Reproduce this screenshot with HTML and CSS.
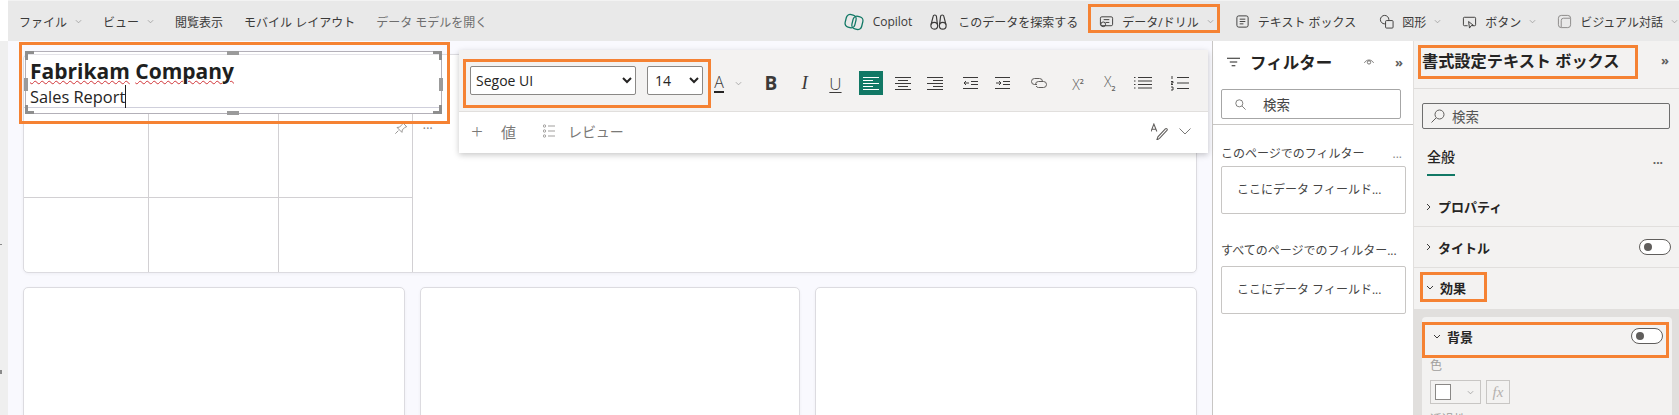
FILE: index.html
```html
<!DOCTYPE html>
<html lang="ja">

<head>
  <meta charset="utf-8">
  <title>Fabrikam Company - Sales Report</title>
  <link rel="stylesheet" href="styles.css">
</head>

<body>
  <div class="page">
    <header class="topbar">
      <nav class="menu">
        <span class="menu-item">ファイル<svg class="chev" viewBox="0 0 8 5"><path d="M1 1l3 3 3-3"/></svg></span>
        <span class="menu-item">ビュー<svg class="chev" viewBox="0 0 8 5"><path d="M1 1l3 3 3-3"/></svg></span>
        <span class="menu-item">閲覧表示</span>
        <span class="menu-item">モバイル レイアウト</span>
        <span class="menu-item is-muted">データ モデルを開く</span>
      </nav>
      <nav class="menu menu-right">
        <span class="menu-item"><svg class="icon copilot" viewBox="0 0 20 20"><g transform="rotate(14 10 10)"><rect x="1.500" y="3.500" width="10" height="13" rx="4"/><rect x="8.500" y="3.500" width="10" height="13" rx="4"/></g></svg><span class="copilot-label">Copilot</span></span>
        <span class="menu-item"><svg class="icon binoculars" viewBox="1.500 1 15 17"><path d="M2 12l2-8c.3-1.500 2.700-1.500 3 0l1 8M10 12l1-8c.3-1.500 2.700-1.500 3 0l2 8"/><circle cx="5" cy="13" r="3.200"/><circle cx="13" cy="13" r="3.200"/></svg>このデータを探索する</span>
        <span class="menu-item"><svg class="icon" viewBox="0 0 16 16"><rect x="1.500" y="3" width="13" height="9.500" rx="1.500"/><path d="M5 6h6M7 9h4"/><circle cx="4.500" cy="11" r="2.500"/></svg>データ/ドリル<svg class="chev" viewBox="0 0 8 5"><path d="M1 1l3 3 3-3"/></svg></span>
        <span class="menu-item"><svg class="icon" viewBox="0 0 16 16"><rect x="2" y="2" width="12" height="12" rx="2"/><path d="M5 5.500h6M5 8h6M5 10.500h4"/></svg>テキスト ボックス</span>
        <span class="menu-item nudge"><svg class="icon" viewBox="0 0 16 16"><circle cx="6" cy="6" r="4.500"/><rect x="7" y="7" width="8" height="8" rx="1" class="icon-fill"/></svg>図形<svg class="chev" viewBox="0 0 8 5"><path d="M1 1l3 3 3-3"/></svg></span>
        <span class="menu-item"><svg class="icon" viewBox="0 0 16 16"><path d="M6 12.500H2.500a1 1 0 0 1-1-1v-7a1 1 0 0 1 1-1h11a1 1 0 0 1 1 1v7a1 1 0 0 1-1 1H11"/><path d="M7 8l1 7 1.700-2.500L12 12z"/></svg>ボタン<svg class="chev" viewBox="0 0 8 5"><path d="M1 1l3 3 3-3"/></svg></span>
        <span class="menu-item is-muted"><svg class="icon" viewBox="0 0 16 16"><rect x="1.500" y="1.500" width="13" height="13" rx="3"/><path d="M4.500 14V7a2.500 2.500 0 0 1 2.500-2.500h7"/></svg><span class="dark">ビジュアル対話</span><svg class="chev" viewBox="0 0 8 5"><path d="M1 1l3 3 3-3"/></svg></span>
      </nav>
    </header>

    <div class="workspace">
      <div class="gutter"></div>

      <main class="canvas">
        <section class="card card-wide">
          <div class="cells">
            <div class="cell"></div><div class="cell"></div><div class="cell"></div>
            <div class="cell"></div><div class="cell"></div><div class="cell"></div>
            <div class="cell"></div><div class="cell"></div><div class="cell"></div>
          </div>
        </section>
        <section class="card"></section>
        <section class="card"></section>
        <section class="card"></section>

        <div class="textbox">
          <div class="textbox-body">
            <p class="textbox-title"><span class="squiggle">Fabrikam</span> <span class="squiggle">Company</span></p>
            <p class="textbox-sub"><span class="caret">Sales Report</span></p>
          </div>
          <i class="handle corner tl"></i><i class="handle corner tr"></i>
          <i class="handle corner bl"></i><i class="handle corner br"></i>
          <i class="handle mid-h top"></i><i class="handle mid-h bottom"></i>
          <i class="handle mid-v left"></i><i class="handle mid-v right"></i>
        </div>

        <div class="visual-tools">
          <svg class="pin" viewBox="0 0 16 16"><path d="M9.500 1.500l5 5-2 .7-3 3-.4 2.800-5.600-5.600 2.800-.4 3-3zM5 11l-3.500 3.500"/></svg>
          <span class="dots">•••</span>
        </div>

        <div class="formatbar">
          <div class="formatbar-top">
            <select class="font-select"><option>Segoe UI</option></select>
            <select class="size-select"><option>14</option></select>
            <span class="fmt-color">A</span>
            <svg class="chev fmt-chev" viewBox="0 0 8 5"><path d="M1 1l3 3 3-3"/></svg>
            <span class="fmt-bold">B</span>
            <span class="fmt-italic">I</span>
            <span class="fmt-under">U</span>
            <span class="fmt-active"><svg viewBox="0 0 16 16"><path d="M0 2.500h16M0 5.500h10M0 8.500h16M0 11.500h10M0 14.500h16"/></svg></span>
            <svg class="fmt-icon" viewBox="0 0 16 16"><path d="M0 2.500h16M3 5.500h10M0 8.500h16M3 11.500h10M0 14.500h16"/></svg>
            <svg class="fmt-icon" viewBox="0 0 16 16"><path d="M0 2.500h16M6 5.500h10M0 8.500h16M6 11.500h10M0 14.500h16"/></svg>
            <svg class="fmt-icon wide" viewBox="0 0 16 16"><path d="M0 2.500h15M8 6.500h7M8 9.500h7M0 13.500h15M6 8H1M3 6L1 8l2 2"/></svg>
            <svg class="fmt-icon" viewBox="0 0 16 16"><path d="M0 2.500h15M8 6.500h7M8 9.500h7M0 13.500h15M1 8h5M4 6l2 2-2 2"/></svg>
            <svg class="fmt-icon wide link" viewBox="0 0 16 16"><path d="M6 9.500H3.500a3 3 0 0 1 0-6h5a3 3 0 0 1 3 3"/><path d="M4.500 9.500a3 3 0 0 1 3-3h5a3 3 0 0 1 0 6h-5a3 3 0 0 1-2.500-1.500"/></svg>
            <span class="fmt-script sup-btn">X<sup>2</sup></span>
            <span class="fmt-script sub-btn">X<sub>2</sub></span>
            <svg class="fmt-lists" viewBox="0 0 18 16"><path d="M4 2.500h14M4 6h14M4 9.500h14M4 13h14M0 2.500h1.500M0 6h1.500M0 9.500h1.500M0 13h1.500"/></svg>
            <svg class="fmt-lists" viewBox="0 0 18 16"><path d="M6 2.500h12M6 8h12M6 13.500h12M1 1v3M0 6.500h2V8H0v1.500h2M0 12h2v3H0"/></svg>
          </div>
          <div class="formatbar-bottom">
            <span class="fmt-plus">+</span>
            <span class="fmt-value">値</span>
            <svg class="fmt-list" viewBox="0 0 12 14"><path d="M5 2h7M5 7h7M5 12h7"/><circle cx="1.500" cy="2" r="1.200"/><circle cx="1.500" cy="7" r="1.200"/><circle cx="1.500" cy="12" r="1.200"/></svg>
            <span class="fmt-review">レビュー</span>
            <svg class="fmt-brush" viewBox="0 0 16 16"><path d="M5.500 16l1-3 7-7.500c1-1 2.500.500 1.500 1.500l-7 7.500z"/><path d="M0 8l2.700-7L5.500 8M1 5.800h3.500"/></svg>
            <svg class="fmt-down" viewBox="0 0 12 7"><path d="M.5.500L6 6 11.500.500"/></svg>
          </div>
        </div>
      </main>

      <aside class="filters">
        <div class="filters-head">
          <svg class="filter-icon" viewBox="0 0 14 10"><path d="M0 1h14M3 5h8M5 9h4"/></svg>
          <h2 class="filters-title">フィルター</h2>
          <svg class="eye" viewBox="0 0 12 8"><path d="M.5 5C3 .500 9 .500 11.500 5"/><circle cx="6" cy="4.500" r="2"/></svg>
          <span class="collapse">»</span>
        </div>
        <div class="filters-search">
          <svg class="search-icon" viewBox="0 0 14 14"><circle cx="5.500" cy="5.500" r="4.500"/><path d="M9 9l4.500 4.500"/></svg>
          <span>検索</span>
        </div>
        <div class="filters-list">
          <div class="filter-label"><span>このページでのフィルター</span><span class="label-dots">...</span></div>
          <div class="drop-box first">ここにデータ フィールド...</div>
          <div class="filter-label"><span>すべてのページでのフィルター...</span></div>
          <div class="drop-box">ここにデータ フィールド...</div>
        </div>
      </aside>

      <aside class="format">
        <div class="format-head">
          <h2 class="format-title">書式設定テキスト ボックス</h2>
          <span class="collapse">»</span>
        </div>
        <div class="format-search">
          <svg class="search-icon flip" viewBox="0 0 14 14"><circle cx="8.500" cy="5.500" r="4.500"/><path d="M5 9L.5 13.500"/></svg>
          <span>検索</span>
        </div>
        <div class="format-tabs">
          <span class="tab-active">全般</span>
          <span class="tab-dots">...</span>
        </div>
        <div class="section section-first"><svg class="arrow" viewBox="0 0 5 8"><path d="M1 1l3 3-3 3"/></svg>プロパティ</div>
        <div class="section"><svg class="arrow" viewBox="0 0 5 8"><path d="M1 1l3 3-3 3"/></svg>タイトル<span class="toggle"></span></div>
        <div class="section section-open"><svg class="arrow-down" viewBox="0 0 8 5"><path d="M1 1l3 3 3-3"/></svg>効果</div>
        <div class="group">
          <div class="group-card">
            <div class="group-head"><svg class="arrow-down" viewBox="0 0 8 5"><path d="M1 1l3 3 3-3"/></svg>背景<span class="toggle"></span></div>
            <div class="group-body">
              <div class="field-label">色</div>
              <div class="color-row">
                <span class="color-pick"><i class="swatch"></i><svg class="chev" viewBox="0 0 8 5"><path d="M1 1l3 3 3-3"/></svg></span>
                <span class="fx"><i>fx</i></span>
              </div>
              <div class="field-label">透過性</div>
            </div>
          </div>
        </div>
      </aside>
    </div>

    <!-- tutorial highlights -->
    <div class="callout c-textbox"></div>
    <div class="callout c-font"></div>
    <div class="callout c-drill"></div>
    <div class="callout c-title"></div>
    <div class="callout c-effect"></div>
    <div class="callout c-bg"></div>
  </div>
</body>

</html>
```

FILE: styles.css
```css
/* reset */
* {
  margin: 0;
  padding: 0;
  box-sizing: border-box;
}

body {
  font-family: "Open Sans", "Noto Sans CJK JP", sans-serif;
  color: #252423;
  background: #fff;
  overflow: hidden;
}

.page {
  position: relative;
  width: 1679px;
  height: 415px;
  overflow: hidden;
}

svg {
  fill: none;
  stroke: currentColor;
  flex-shrink: 0;
}

/* top bar */
.topbar {
  display: flex;
  justify-content: space-between;
  height: 41px;
  margin-left: 8px;
  padding: 1px 1px 0 11px;
  background: #e9e9e9;
  border-top: 1px solid #f3f3f3;
}

.menu {
  display: flex;
  align-items: center;
  gap: 21px;
  font-size: 12px;
}

.menu-item {
  display: flex;
  align-items: center;
  color: #3b3a39;
  white-space: nowrap;
}

.menu-item.nudge {
  margin-left: 2px;
}

.menu-item.is-muted {
  color: #6e6e6e;
}

.menu-item .dark {
  color: #3b3a39;
}

.chev {
  width: 7px;
  height: 5px;
  margin-left: 8px;
  color: #9a9a9a;
  stroke-width: 0.9;
}

.icon {
  width: 15px;
  height: 15px;
  margin-right: 8px;
  stroke-width: 1;
  color: #3b3a39;
}

.is-muted .icon {
  color: #8a8886;
}

.icon-fill {
  fill: #e9e9e9;
}

.copilot {
  width: 20px;
  height: 20px;
  margin-right: 9px;
  color: #117865;
  stroke-width: 1.3;
}

.binoculars {
  width: 17px;
  height: 18px;
  margin-right: 11px;
  stroke-width: 1.1;
}

.copilot-label {
  margin-right: -3px;
  font-size: 12px;
}

/* main area */
.workspace {
  display: flex;
  height: 374px;
}

.gutter {
  position: relative;
  width: 8px;
  background: #efefef;
}

.gutter::before,
.gutter::after {
  content: "";
  position: absolute;
  left: 0;
  width: 2px;
  background: #8a8a8a;
}

.gutter::before {
  top: 203px;
  height: 1px;
}

.gutter::after {
  top: 329px;
  height: 4px;
}

.canvas {
  position: relative;
  flex: 1;
  display: grid;
  grid-template-columns: 382px 380px 382px;
  grid-auto-rows: 219px;
  column-gap: 15px;
  row-gap: 14px;
  padding: 13px 15px 0 15px;
  background: #f9f9fe;
}

.card {
  background: #fff;
  border: 1px solid #dcdbe0;
  border-radius: 5px;
  box-shadow: 0 1px 3px rgba(60, 60, 90, 0.06);
}

.card-wide {
  grid-column: 1 / -1;
  overflow: hidden;
}

.cells {
  display: grid;
  grid-template-columns: 125px 130px 134px;
  grid-template-rows: 53px 90px 76px;
  width: 389px;
}

.cell {
  border-right: 1px solid #d2d0d3;
  border-bottom: 1px solid #d2d0d3;
}

.cell:nth-child(n + 7) {
  border-bottom: 0;
}

/* selected text box */
.textbox {
  position: absolute;
  left: 17px;
  top: 10px;
  width: 417px;
  height: 63px;
  padding: 2px 2px 5px;
  background: #fff;
  border: 1px solid #b3b0b8;
}

.textbox-body {
  height: 100%;
  padding: 2px 0 0 2px;
  border-top: 1px solid #e4e3e8;
  border-bottom: 1px solid #cfcfdb;
}

.textbox-title {
  font-size: 21px;
  font-weight: 700;
  line-height: 28px;
  color: #201f1e;
  white-space: nowrap;
}

.squiggle {
  text-decoration: underline wavy #d13438 1px;
  text-underline-offset: 1px;
}

.textbox-sub {
  font-size: 16.4px;
  line-height: 24px;
  color: #252423;
}

.caret {
  border-right: 1px solid #201f1e;
}

.handle {
  position: absolute;
  display: block;
  background: #9b9b9b;
}

.corner {
  width: 9px;
  height: 9px;
  background: none;
  border: 0 solid #8e8e8e;
}

.tl { left: -1px; top: -1px; border-width: 3px 0 0 3px; }
.tr { right: -1px; top: -1px; border-width: 3px 3px 0 0; }
.bl { left: -1px; bottom: -1px; border-width: 0 0 3px 3px; }
.br { right: -1px; bottom: -1px; border-width: 0 3px 3px 0; }

.mid-h {
  left: 201px;
  width: 12px;
  height: 4px;
}

.mid-h.top { top: -1px; }
.mid-h.bottom { bottom: -2px; }

.mid-v {
  top: 26px;
  width: 4px;
  height: 13px;
}

.mid-v.left { left: -2px; }
.mid-v.right { right: -2px; }

.visual-tools {
  position: absolute;
  left: 386px;
  top: 80px;
  display: flex;
  align-items: center;
  gap: 15px;
  color: #8a8886;
}

.pin {
  width: 14px;
  height: 14px;
  stroke-width: 1;
}

.dots {
  font-size: 7px;
  letter-spacing: 0.8px;
}

/* floating format bar */
.formatbar {
  position: absolute;
  left: 451px;
  top: 9px;
  width: 749px;
  height: 103px;
  background: #fff;
  box-shadow: 0 2px 6px rgba(0, 0, 0, 0.22);
}

.formatbar-top {
  display: flex;
  align-items: center;
  height: 62px;
  padding: 5px 0 0 11px;
  background: #f3f2f1;
  border-bottom: 1px solid #e1dfdd;
  color: #3b3a39;
}

.font-select {
  width: 167px;
  height: 29px;
  margin: -5px 11px 0 0;
  padding-left: 1px;
  font: 14px "Open Sans", sans-serif;
  color: #252423;
  background: #fff;
  border: 1px solid #8a8886;
  border-radius: 2px;
}

.size-select {
  width: 56px;
  height: 29px;
  margin: -5px 11px 0 0;
  padding-left: 3px;
  font: 14px "Open Sans", sans-serif;
  color: #252423;
  background: #fff;
  border: 1px solid #8a8886;
  border-radius: 2px;
}

.fmt-color {
  width: 11px;
  font-size: 16px;
  font-weight: 300;
  line-height: 18px;
  text-align: center;
  border-bottom: 2px solid #252423;
}

.fmt-chev {
  margin: 0 22px 0 11px;
}

.fmt-bold {
  width: 13px;
  margin-right: 24px;
  font-size: 19px;
  font-weight: 700;
}

.fmt-italic {
  width: 8px;
  margin-right: 20px;
  font: italic 19px "Liberation Serif", serif;
}

.fmt-under {
  width: 12px;
  margin-right: 18px;
  font-size: 17px;
  font-weight: 300;
  line-height: 19px;
  text-decoration: underline;
  text-underline-offset: 2px;
  text-decoration-thickness: 1px;
}

.fmt-active {
  display: flex;
  justify-content: center;
  align-items: center;
  width: 24px;
  height: 24px;
  margin-right: 12px;
  color: #fff;
  background: #117865;
}

.fmt-active svg {
  width: 16px;
  height: 16px;
  stroke-width: 1;
}

.fmt-icon {
  width: 16px;
  height: 16px;
  margin-right: 16px;
  stroke-width: 1;
}

.fmt-icon.wide {
  margin-left: 4px;
}

.fmt-icon.link {
  color: #605e5c;
}

.fmt-script {
  font-size: 14px;
  font-weight: 300;
  line-height: 16px;
  color: #605e5c;
}

.sup-btn {
  width: 14px;
  margin: 0 18px 0 9px;
}

.sub-btn {
  width: 12px;
  margin: 4px 18px 0 0;
}

.fmt-script sup,
.fmt-script sub {
  font-size: 7px;
  font-weight: 600;
}

.fmt-lists {
  width: 18px;
  height: 16px;
  margin-right: 19px;
  stroke-width: 1;
}

.formatbar-bottom {
  display: flex;
  align-items: center;
  height: 41px;
  padding: 0 17px 3px 12px;
  color: #7a7977;
}

.fmt-plus {
  width: 14px;
  margin-right: 16px;
  font-size: 21px;
  font-weight: 300;
  line-height: 1;
}

.fmt-value {
  margin-right: 27px;
  font-size: 15px;
}

.fmt-list {
  width: 12px;
  height: 14px;
  margin-right: 13px;
  color: #a19f9d;
  stroke-width: 1;
}

.fmt-review {
  font-size: 14px;
  letter-spacing: -0.1px;
}

.fmt-brush {
  width: 17px;
  height: 17px;
  margin: 0 11px 0 auto;
  stroke-width: 1;
  color: #605e5c;
}

.fmt-down {
  width: 12px;
  height: 7px;
  stroke-width: 1;
}

/* filter pane */
.filters {
  width: 201px;
  background: #fff;
  border-left: 1px solid #c8c6c4;
}

.filters-head {
  display: flex;
  align-items: center;
  height: 48px;
  padding: 0 10px 6px 14px;
}

.filter-icon {
  width: 13px;
  height: 10px;
  margin-right: 10px;
  stroke-width: 1.2;
}

.filters-title {
  flex: 1;
  font-size: 16.5px;
  font-weight: 700;
}

.eye {
  width: 10px;
  height: 8px;
  margin-right: 21px;
  color: #605e5c;
  stroke-width: 1;
}

.collapse {
  font-size: 13px;
  font-weight: 700;
  line-height: 1;
  color: #605e5c;
}

.filters-search {
  display: flex;
  align-items: center;
  width: 180px;
  height: 30px;
  margin-left: 8px;
  padding-left: 13px;
  font-size: 13.5px;
  color: #444;
  border: 1px solid #a6a6a6;
  border-radius: 2px;
}

.search-icon {
  width: 11px;
  height: 11px;
  margin-right: 17px;
  color: #605e5c;
  stroke-width: 1;
}

.filters-list {
  margin-top: 5px;
  padding: 17px 7px 0 8px;
  border-top: 1px solid #c8c6c4;
}

.filter-label {
  display: flex;
  justify-content: space-between;
  align-items: center;
  height: 22px;
  padding-right: 4px;
  font-size: 12px;
  color: #444;
  white-space: nowrap;
}

.label-dots {
  color: #888;
}

.drop-box {
  height: 48px;
  margin: 5px 0 25px;
  padding-left: 15px;
  font-size: 12px;
  line-height: 46px;
  color: #444;
  white-space: nowrap;
  border: 1px solid #c8c6c4;
  border-radius: 2px;
}

.drop-box.first {
  margin-top: 2px;
}

/* format pane */
.format {
  display: flex;
  flex-direction: column;
  flex: 1;
  background: #f3f2f1;
  border-left: 1px solid #e1dfdd;
}

.format-head {
  display: flex;
  justify-content: space-between;
  align-items: center;
  flex-shrink: 0;
  height: 48px;
  padding: 0 10px 9px 8px;
  border-bottom: 1px solid #dedcda;
}

.format-title {
  font-size: 16.2px;
  font-weight: 700;
  white-space: nowrap;
}

.format-search {
  display: flex;
  align-items: center;
  flex-shrink: 0;
  width: 248px;
  height: 26px;
  margin: 14px 0 0 8px;
  padding-left: 8px;
  font-size: 13.5px;
  color: #555;
  border: 1px solid #6e6e6e;
  border-radius: 2px;
}

.search-icon.flip {
  width: 14px;
  height: 14px;
  margin-right: 7px;
}

.format-tabs {
  display: flex;
  justify-content: space-between;
  align-items: center;
  flex-shrink: 0;
  height: 33px;
  margin-top: 14px;
  padding: 0 16px 0 13px;
}

.tab-active {
  height: 33px;
  padding-top: 3px;
  font-size: 14px;
  font-weight: 500;
  border-bottom: 2px solid #117865;
}

.tab-dots {
  font-weight: 700;
  font-size: 12px;
  color: #605e5c;
}

.section {
  display: flex;
  align-items: center;
  flex-shrink: 0;
  height: 41px;
  padding: 0 8px 0 12px;
  font-size: 13px;
  font-weight: 700;
  border-bottom: 1px solid #e1dfdd;
}

.section-first {
  height: 51px;
  padding-top: 11px;
}

.section-open {
  padding-bottom: 2px;
  border-bottom: 0;
}

.arrow {
  width: 5px;
  height: 8px;
  margin-right: 7px;
  color: #3b3a39;
  stroke-width: 1;
}

.arrow-down {
  width: 8px;
  height: 5px;
  margin-right: 6px;
  color: #3b3a39;
  stroke-width: 1;
}

.toggle {
  position: relative;
  width: 32px;
  height: 16px;
  margin-left: auto;
  background: #fff;
  border: 1px solid #605e5c;
  border-radius: 8px;
}

.toggle::after {
  content: "";
  position: absolute;
  left: 4px;
  top: 3px;
  width: 8px;
  height: 8px;
  background: #605e5c;
  border-radius: 50%;
}

.group {
  flex: 1;
  padding: 8px 7px 0 8px;
  background: #e1dfdd;
}

.group-card {
  height: 100%;
  background: #f3f2f1;
  border-radius: 4px 4px 0 0;
}

.group-head {
  display: flex;
  align-items: center;
  height: 38px;
  padding: 0 9px 0 11px;
  font-size: 13px;
  font-weight: 700;
}

.group-body {
  padding: 2px 8px 0;
}

.field-label {
  height: 17px;
  font-size: 12px;
  line-height: 17px;
  color: #a19f9d;
}

.color-row {
  display: flex;
  gap: 5px;
  height: 24px;
  margin: 6px 0 7px;
}

.color-pick {
  display: flex;
  align-items: center;
  width: 51px;
  padding-left: 4px;
  border: 1px solid #c8c6c4;
}

.swatch {
  display: block;
  width: 16px;
  height: 16px;
  background: #fff;
  border: 1px solid #8a8886;
}

.color-pick .chev {
  margin-left: 16px;
}

.fx {
  width: 24px;
  font: italic 15px/22px "Liberation Serif", serif;
  text-align: center;
  color: #b3b0ad;
  border: 1px solid #c8c6c4;
}

/* orange tutorial highlights, drawn over the app */
.callout {
  position: absolute;
  border: 3px solid #f58233;
}

.c-textbox { left: 19px; top: 42px; width: 431px; height: 82px; }
.c-font { left: 463px; top: 59px; width: 248px; height: 49px; }
.c-drill { left: 1088px; top: 4px; width: 132px; height: 29px; }
.c-title { left: 1418px; top: 45px; width: 220px; height: 34px; }
.c-effect { left: 1420px; top: 272px; width: 67px; height: 30px; }
.c-bg { left: 1422px; top: 322px; width: 247px; height: 36px; }
```
